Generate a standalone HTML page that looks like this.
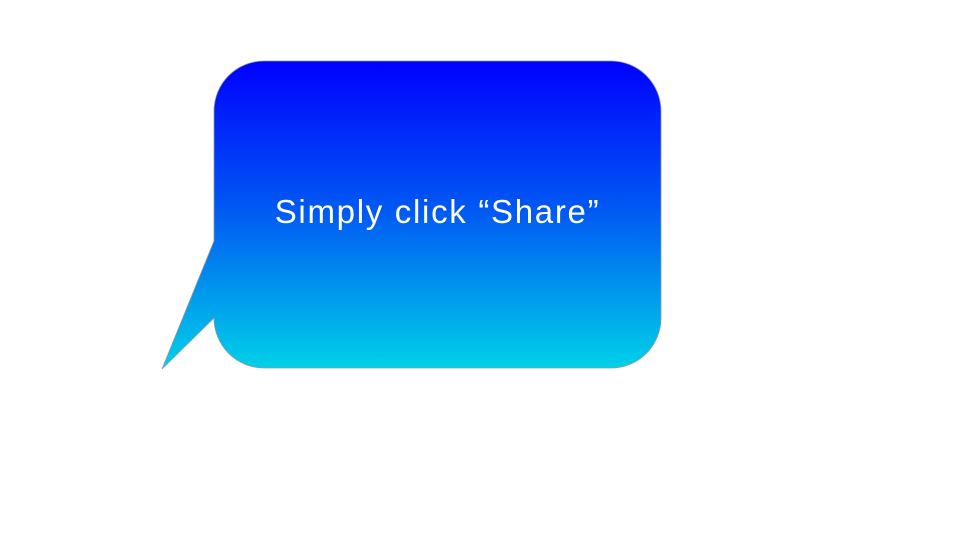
<!DOCTYPE html>
<html><head><meta charset="utf-8"><style>
html,body{margin:0;padding:0;background:#fff;width:960px;height:540px;overflow:hidden}
svg{position:absolute;left:0;top:0}
.t{position:absolute;left:214px;width:447px;top:192px;text-align:center;color:#fff;font-family:"Liberation Sans",sans-serif;font-size:33px;line-height:40px;letter-spacing:1.7px}
</style></head><body>
<svg width="960" height="540" viewBox="0 0 960 540">
<defs><linearGradient id="g" x1="0" y1="61" x2="0" y2="369" gradientUnits="userSpaceOnUse">
<stop offset="0" stop-color="#0000ff"/><stop offset="0.5" stop-color="#005cf2"/><stop offset="1" stop-color="#00d2e8"/></linearGradient></defs>
<path d="M264 61 H611 A50 50 0 0 1 661 111 V318 A50 50 0 0 1 611 368 H264 A50 50 0 0 1 214 318 L162 369 L214 241 V111 A50 50 0 0 1 264 61 Z" fill="url(#g)" stroke="#8a9aa8" stroke-width="0.8"/>
</svg>
<div class="t">Simply click “Share”</div>
</body></html>
